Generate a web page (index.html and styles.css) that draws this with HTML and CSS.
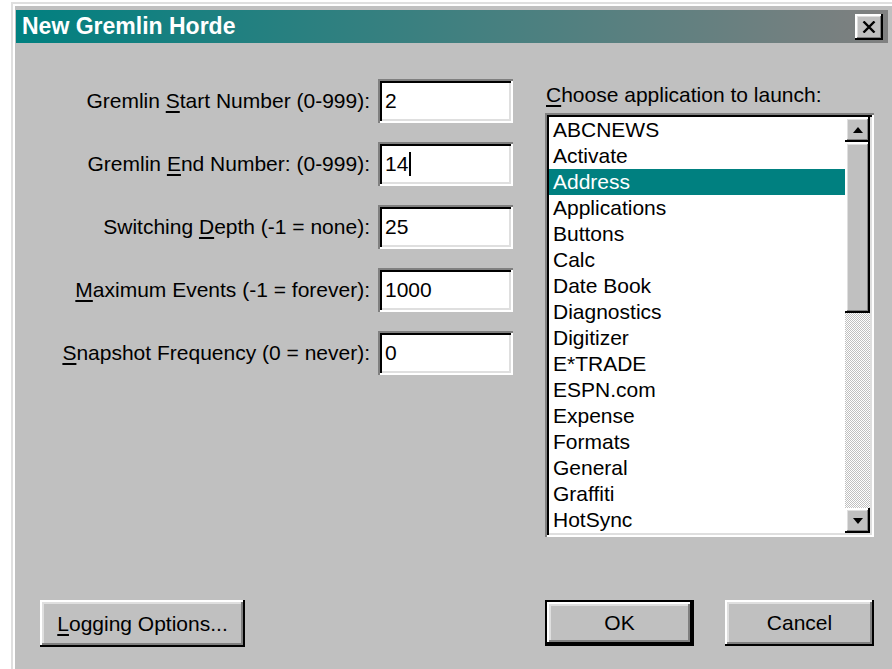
FILE: index.html
```html
<!DOCTYPE html>
<html lang="en">
<head>
<meta charset="utf-8">
<title>New Gremlin Horde</title>
<link rel="stylesheet" href="styles.css">
</head>
<body>
<div class="window">
  <div class="frame">
    <div class="titlebar">
      <span class="title">New Gremlin Horde</span>
      <button class="close" type="button" aria-label="Close">
        <svg width="14" height="12" viewBox="0 0 14 12"><path d="M1.5 0.5 L12.5 11.5 M12.5 0.5 L1.5 11.5" stroke="#000" stroke-width="2.4" fill="none"/></svg>
      </button>
    </div>
    <div class="body">
      <div class="main">
        <div class="form">
          <label class="label">Gremlin <u>S</u>tart Number (0-999):</label>
          <div class="field">2</div>
          <label class="label">Gremlin <u>E</u>nd Number: (0-999):</label>
          <div class="field">14<span class="caret"></span></div>
          <label class="label">Switching <u>D</u>epth (-1 = none):</label>
          <div class="field">25</div>
          <label class="label"><u>M</u>aximum Events (-1 = forever):</label>
          <div class="field">1000</div>
          <label class="label"><u>S</u>napshot Frequency (0 = never):</label>
          <div class="field">0</div>
        </div>
        <div class="apps">
          <div class="apps-label"><u>C</u>hoose application to launch:</div>
          <div class="listbox">
            <ul class="items">
              <li>ABCNEWS</li>
              <li>Activate</li>
              <li class="selected">Address</li>
              <li>Applications</li>
              <li>Buttons</li>
              <li>Calc</li>
              <li>Date Book</li>
              <li>Diagnostics</li>
              <li>Digitizer</li>
              <li>E*TRADE</li>
              <li>ESPN.com</li>
              <li>Expense</li>
              <li>Formats</li>
              <li>General</li>
              <li>Graffiti</li>
              <li>HotSync</li>
            </ul>
            <div class="scrollbar">
              <div class="sb-btn"><svg width="10" height="6" viewBox="0 0 10 6"><path d="M5 0 L10 6 L0 6 Z" fill="#000"/></svg></div>
              <div class="sb-thumb"></div>
              <div class="sb-track"></div>
              <div class="sb-btn"><svg width="10" height="6" viewBox="0 0 10 6"><path d="M0 0 L10 0 L5 6 Z" fill="#000"/></svg></div>
            </div>
          </div>
        </div>
      </div>
      <div class="actions">
        <button class="btn btn-logging" type="button"><u>L</u>ogging Options...</button>
        <div class="actions-right">
          <button class="btn btn-default" type="button">OK</button>
          <button class="btn" type="button">Cancel</button>
        </div>
      </div>
    </div>
  </div>
</div>
</body>
</html>
```

FILE: styles.css
```css
html, body {
  margin: 0;
  height: 669px;
  overflow: hidden;
  background: #fff;
}

body {
  font-family: "Liberation Sans", Arial, sans-serif;
  font-size: 21px;
  color: #000;
}

u {
  text-decoration-thickness: 2px;
  text-underline-offset: 3px;
}

/* Window chrome: the right and bottom edges run on past the view */
.window {
  margin: 2px 0 0 11px;
  width: 881px;
  height: 667px;
  box-sizing: border-box;
  border-top: 2px solid #dfdfdf;
  border-left: 2px solid #dfdfdf;
}

.frame {
  height: 100%;
  box-sizing: border-box;
  border-top: 2px solid #fff;
  border-left: 2px solid #fff;
  background: #c0c0c0;
  padding: 4px 0 0 1px;
}

.titlebar {
  width: 872px;
  height: 33px;
  box-sizing: border-box;
  padding: 0 5px 0 6px;
  display: flex;
  align-items: center;
  justify-content: space-between;
  background: linear-gradient(to right, #008080, #808080);
}

.title {
  color: #fff;
  font-weight: bold;
  font-size: 23px;
  line-height: 33px;
}

.close {
  width: 28px;
  height: 26px;
  padding: 0;
  border: none;
  background: #c0c0c0;
  display: flex;
  align-items: center;
  justify-content: center;
  box-shadow: inset -2px -2px #000, inset 2px 2px #fff, inset -3px -3px #808080, inset 3px 3px #dfdfdf;
}

/* Dialog body */
.body {
  width: 872px;
  box-sizing: border-box;
  padding: 0 14px 0 24px;
}

.main {
  display: flex;
  align-items: flex-start;
  gap: 32px;
}

.form {
  display: grid;
  grid-template-columns: 330px 135px;
  column-gap: 8px;
  row-gap: 19px;
  align-items: center;
  padding-top: 36px;
}

.label {
  text-align: right;
  line-height: 24px;
  white-space: nowrap;
}

.field {
  height: 44px;
  box-sizing: border-box;
  padding: 4px 7px;
  line-height: 36px;
  background: #fff;
  box-shadow: inset 2px 2px #808080, inset -2px -2px #fff, inset 4px 4px #000, inset -4px -4px #dfdfdf;
  display: flex;
  align-items: center;
}

.caret {
  display: inline-block;
  width: 2px;
  height: 24px;
  margin-left: 1px;
  background: #000;
}

/* Application list */
.apps {
  width: 329px;
  padding-top: 40px;
}

.apps-label {
  line-height: 24px;
  margin-bottom: 6px;
  padding-left: 1px;
  white-space: nowrap;
}

.listbox {
  height: 424px;
  box-sizing: border-box;
  padding: 4px;
  display: flex;
  background: #fff;
  box-shadow: inset 2px 2px #808080, inset -2px -2px #fff, inset 4px 4px #000, inset -4px -4px #dfdfdf;
}

.items {
  flex: 1;
  list-style: none;
  margin: 0;
  padding: 0;
}

.items li {
  height: 26px;
  line-height: 26px;
  padding-left: 4px;
  white-space: nowrap;
}

.items li.selected {
  background: #008080;
  color: #fff;
}

.scrollbar {
  width: 25px;
  display: flex;
  flex-direction: column;
}

.sb-btn,
.sb-thumb {
  background: #c0c0c0;
  box-shadow: inset -2px -2px #000, inset 2px 2px #fff, inset -3px -3px #808080, inset 3px 3px #dfdfdf;
}

.sb-btn {
  height: 25px;
  display: flex;
  align-items: center;
  justify-content: center;
}

.sb-thumb {
  height: 171px;
}

.sb-track {
  flex: 1;
  background-color: #c0c0c0;
  background-image: conic-gradient(#fff 0 25%, #c0c0c0 0 50%, #fff 0 75%, #c0c0c0 0);
  background-size: 2px 2px;
}

/* Buttons */
.actions {
  display: flex;
  justify-content: space-between;
  align-items: flex-start;
  margin-top: 63px;
}

.actions-right {
  display: flex;
  gap: 31px;
}

.btn {
  font: inherit;
  color: #000;
  width: 149px;
  height: 46px;
  padding: 0;
  border: none;
  background: #c0c0c0;
  box-shadow: inset -2px -2px #000, inset 2px 2px #fff, inset -4px -4px #808080, inset 4px 4px #dfdfdf;
}

.btn-logging {
  width: 205px;
  height: 47px;
}

.btn-default {
  box-shadow: inset 0 0 0 2px #000, inset -4px -4px #000, inset 4px 4px #fff, inset -6px -6px #808080, inset 6px 6px #dfdfdf;
}
```
